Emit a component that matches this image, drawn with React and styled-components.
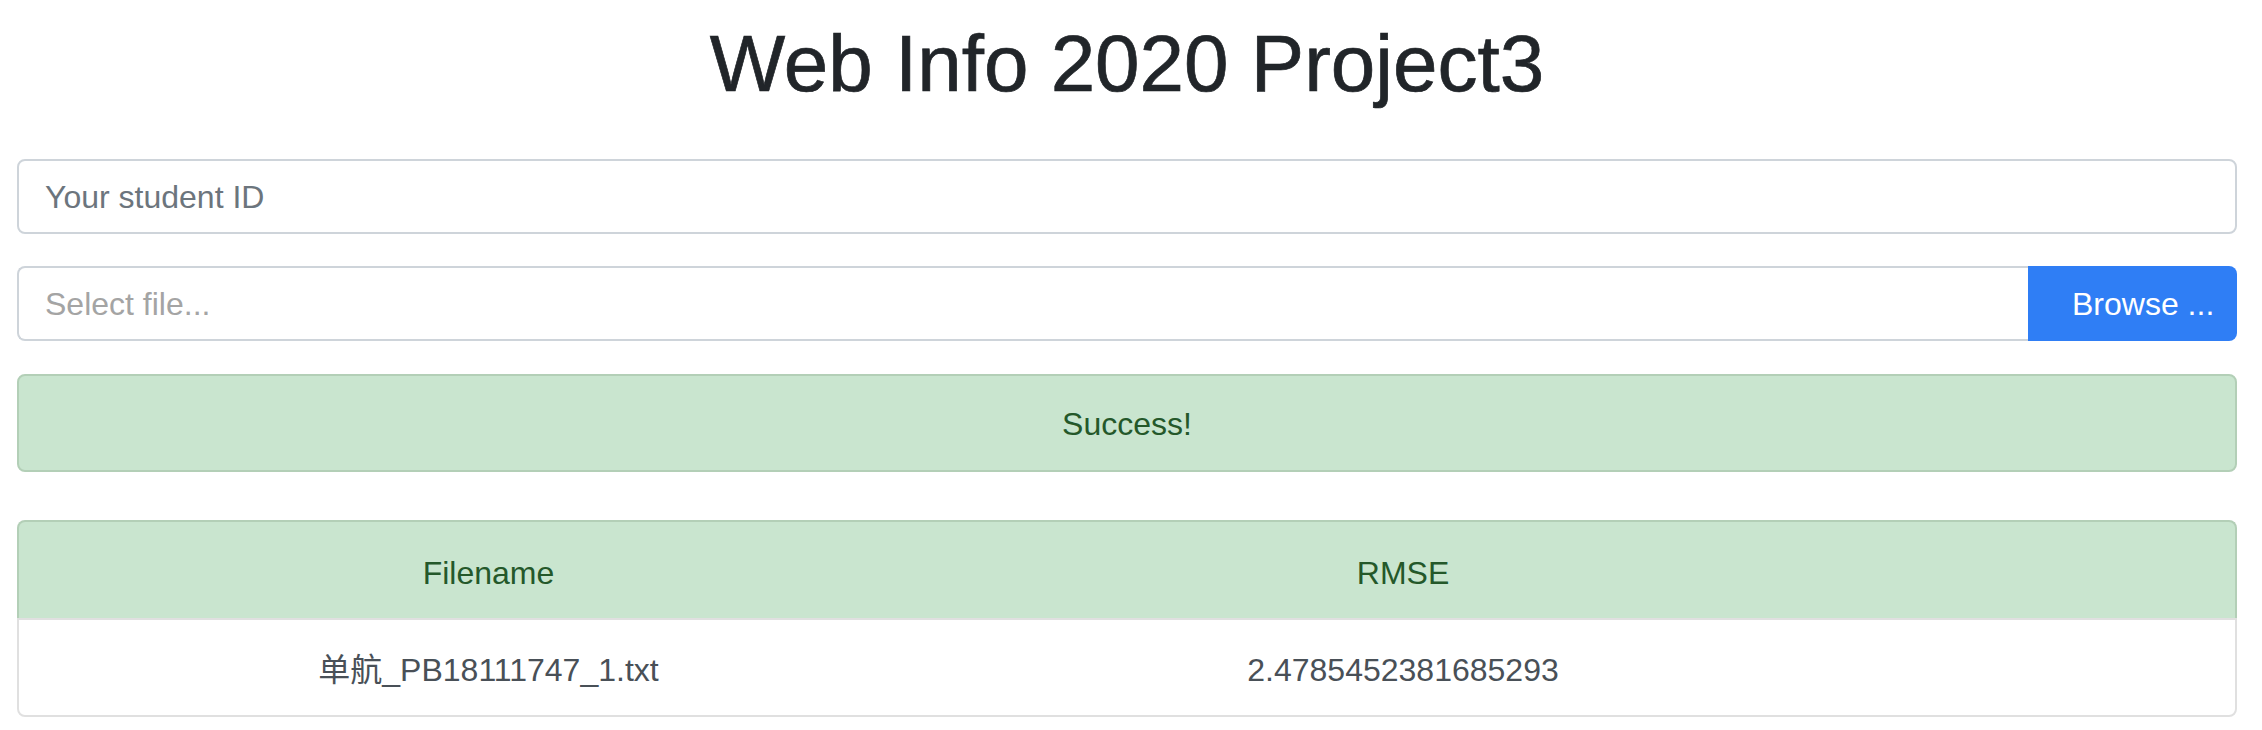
import React from 'react';
import styled, { createGlobalStyle } from 'styled-components';

const GlobalStyle = createGlobalStyle`
  body {
    margin: 0;
    background: #ffffff;
    font-family: "Liberation Sans", "Noto Sans CJK SC", sans-serif;
    color: #212529;
  }
  * { box-sizing: border-box; }
`;

const results = [
  { filename: '单航_PB18111747_1.txt', rmse: '2.4785452381685293' },
];

const App = () => {
  return (
    <>
      <GlobalStyle />
      <Page>
        <Title>Web Info 2020 Project3</Title>
        <TextInput type="text" placeholder="Your student ID" />
        <FileGroup>
          <FileInput type="text" readOnly placeholder="Select file..." />
          <BrowseButton type="button">Browse ...</BrowseButton>
        </FileGroup>
        <Alert>Success!</Alert>
        <ResultTable>
          <HeadRow>
            <Cell>Filename</Cell>
            <Cell>RMSE</Cell>
            <Cell />
          </HeadRow>
          {results.map(r => (
            <BodyRow key={r.filename}>
              <Cell>{r.filename}</Cell>
              <Cell>{r.rmse}</Cell>
              <Cell />
            </BodyRow>
          ))}
        </ResultTable>
      </Page>
    </>
  );
};

const Page = styled.div`
  padding: 16px 25px 0 17px;
  display: flex;
  flex-direction: column;
`;

const Title = styled.h1`
  margin: 0 0 47px;
  font-size: 80px;
  line-height: 96px;
  font-weight: 500;
  text-align: center;
  color: #212529;
  -webkit-text-stroke: 0.7px #212529;
`;

const TextInput = styled.input`
  display: block;
  width: 100%;
  height: 75px;
  margin: 0 0 32px;
  padding: 2px 24px 0 26px;
  font-family: inherit;
  font-size: 32px;
  color: #495057;
  background: #fff;
  border: 2px solid #ced4da;
  border-radius: 8px;
  outline: none;

  &::placeholder {
    color: #6c757d;
  }
`;

const FileGroup = styled.div`
  display: flex;
  height: 75px;
  margin-bottom: 33px;
`;

const FileInput = styled(TextInput)`
  flex: 1;
  min-width: 0;
  height: 100%;
  margin: 0;
  border-right: none;
  border-radius: 8px 0 0 8px;

  &::placeholder {
    color: #a4a4a4;
  }
`;

const BrowseButton = styled.button`
  flex: 0 0 209px;
  padding: 2px 0 0 44px;
  text-align: left;
  white-space: nowrap;
  font-family: inherit;
  font-size: 32px;
  color: #ffffff;
  background: #2f7ef5;
  border: none;
  border-radius: 0 8px 8px 0;
`;

const Alert = styled.div`
  padding: 24px 40px 22px;
  margin-bottom: 48px;
  font-size: 32px;
  line-height: 48px;
  text-align: center;
  color: #24582a;
  background: #c9e5cf;
  border: 2px solid #b3cfb7;
  border-radius: 8px;
`;

const ResultTable = styled.div`
  display: flex;
  flex-direction: column;
  font-size: 32px;
`;

const Row = styled.div`
  display: grid;
  grid-template-columns: 939px 890px 1fr;
  align-items: center;
`;

const HeadRow = styled(Row)`
  height: 98px;
  padding-top: 5px;
  color: #24582a;
  background: #c9e5cf;
  border: 2px solid #b3cfb7;
  border-bottom: none;
  border-radius: 8px 8px 0 0;
`;

const BodyRow = styled(Row)`
  height: 99px;
  padding-top: 5px;
  color: #495057;
  border: 2px solid #e0e0e0;
  border-radius: 0 0 8px 8px;
`;

const Cell = styled.div`
  height: 48px;
  line-height: 48px;
  text-align: center;
  white-space: nowrap;
  overflow: hidden;
`;

export default App;
